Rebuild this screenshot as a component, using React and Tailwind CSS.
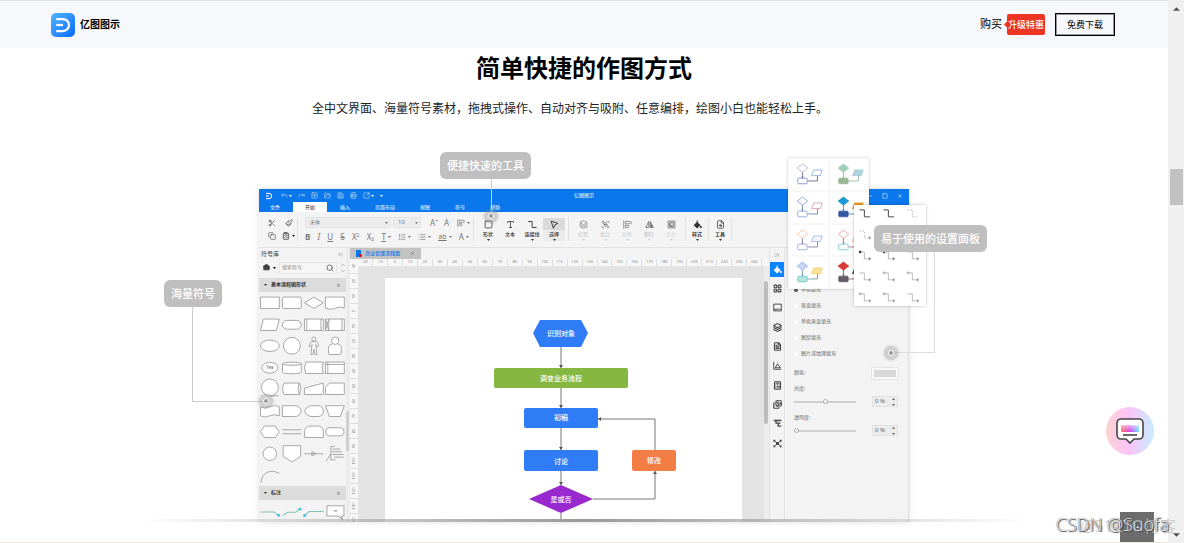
import { useState } from 'react';
import {
  Undo, Redo, SquarePlus, FolderOpen, Save, Printer, SquareArrowOutUpRight, Scissors, Paintbrush,
  Copy, ClipboardList, Search, Square, Type, Layers, Group, AlignStartVertical,
  FileSearch, LayoutGrid, FileText, Calculator, Images, ChevronsLeft, ChevronsRight, ChevronUp, ChevronDown,
  List, ListOrdered, Briefcase, X, Minus,
} from 'lucide-react';

const FONT = "font-['Noto_Sans','Noto_Sans_CJK_SC',sans-serif]";

const quickActions = [Undo, Redo, SquarePlus, FolderOpen, Save, Printer, SquareArrowOutUpRight];
const tabs = ['文件', '开始', '插入', '页面布局', '视图', '符号', '帮助'];

const insertTools = [
  { label: '形状', icon: Square, caret: true },
  { label: '文本', icon: Type },
  { label: '连接线', icon: ElbowIcon, caret: true },
  { label: '选择', icon: CursorIcon, caret: true, active: true },
];

const arrangeTools = [
  { label: '位置', icon: Layers },
  { label: '组合', icon: Group },
  { label: '对齐', icon: AlignStartVertical },
  { label: '翻转', icon: FlipIcon },
  { label: '大小', icon: SizeIcon },
];

const sideIcons = [LayoutGrid, PictureIcon, Layers, FileText, PlotIcon, Calculator, Images, OutlineIcon, HubIcon];
const fills = ['单色填充', '渐变填充', '单色渐变填充', '图案填充', '图片或纹理填充'];

const shapes = [
  'M4 15h56v34H4z',
  'M8 15h48q4 0 4 4v26q0 4-4 4H8q-4 0-4-4V19q0-4 4-4z',
  'M32 15L60 32 32 49 4 32z',
  'M4 15h56v32q-14-5-26 1t-30 0z',
  'M13 15h47l-9 34H4z',
  'M17 19h30a13 13 0 0 1 0 26H17a13 13 0 0 1 0-26z',
  'M4 15h56v34H4zM11 15v34M53 15v34',
  'M4 15h56v34H4zM14 15v34M53 15v34M4 15l10 34M14 15L4 49',
  'M4 32a28 17 0 1 0 56 0a28 17 0 1 0-56 0',
  'M7 32a25 25 0 1 0 50 0a25 25 0 1 0-50 0',
  'M26 12a6 6 0 1 0 12 0a6 6 0 1 0-12 0M24 20h16l6 10-2 6-7-8 4 30h-6l-3-16-3 16h-6l4-30-7 8-2-6z',
  'M22 17a11 11 0 1 0 22 0a11 11 0 1 0-22 0M24 28q-11 0-11 12v14q0 4 4 4h30q4 0 4-4V40q0-12-9-12',
  'M8 32a24 16 0 1 0 48 0a24 16 0 1 0-48 0',
  'M4 20c0-6 56-6 56 0v25c0 6-56 6-56 0zc0 6 56 6 56 0',
  'M8 15h52q-8 17 0 34H8q-8-17 0-34z',
  'M4 15h56v34H4zM4 22h56M11 15v34',
  'M7 28a25 25 0 1 0 50 0a25 25 0 1 0-50 0M32 53h26',
  'M9 15h46q7 17 0 34H9q-9-17 0-34zM55 15q-9 17 0 34',
  'M4 30L60 15v34H4z',
  'M16 15h44v34H4V27z',
  'M4 20q14 8 28 0t28 0v27q-14-7-28 0t-28 0z',
  'M4 17h38a17 16 0 0 1 0 32H4z',
  'M22 17h24q14 2 14 16t-14 16H22Q8 45 4 33 8 21 22 17z',
  'M4 17h56L48 49H16z',
  'M16 15h32l12 17-12 17H16L4 32z',
  'M4 26h56M4 38h56',
  'M18 15h28q14 4 14 16v18H4V31Q4 19 18 15z',
  'M17 20h30a12 12 0 0 1 0 24H17a12 12 0 0 1 0-24z',
  'M12 32a20 20 0 1 0 40 0a20 20 0 1 0-40 0',
  'M6 8h52v32L32 56 6 40z',
  'M4 32h56M26 26l12 6-12 6z',
  'M32 10H20v40h14M20 32L6 54M24 18h24M24 26h28M24 34h34M30 42h28',
  'M6 56C8 20 40 16 60 28',
];

// diamond, box, parallelogram: stroke colour followed by fill colour
const themes = [
  { d: ['#b7a4dc', '#fff'], r: ['#6f83c6', '#fff'], p: ['#7fa8dc', '#fff'], l: '#5a5080' },
  { d: ['#9dd0b8', '#9dd0b8'], r: ['#9ab894', '#9ab894'], p: ['#9fcad4', '#b1d4dc'], l: '#8fae9c' },
  { d: ['#7d9ad8', '#fff'], r: ['#7d9ad8', '#fff'], p: ['#d894a8', '#fff'], l: '#5c7488' },
  { d: ['#1c9ad4', '#1c9ad4'], r: ['#3458a4', '#3458a4'], p: ['#f09a20', '#f09a20'], l: '#2a7fae' },
  { d: ['#f0bc94', '#fff'], r: ['#8fa0d8', '#fff'], p: ['#9ab0e8', '#f4f7ff'], l: '#7a6a9a' },
  { d: ['#ec9a9a', '#fff'], r: ['#62c4d4', '#fff'], p: ['#f0b090', '#fff'], l: '#c05060' },
  { d: ['#9cb4e4', '#c8d6f4'], r: ['#6cc4bc', '#b4e4e0'], p: ['#f0cc60', '#fbe49c'], l: '#5a90a8' },
  { d: ['#dc3838', '#dc3838'], r: ['#645c68', '#645c68'], p: ['#4a4048', '#4a4048'], l: '#704850' },
];

function Icon24({ className, children }) {
  return (
    <svg viewBox="0 0 24 24" className={className} fill="none" stroke="currentColor" strokeWidth="2.5">
      {children}
    </svg>
  );
}

function ElbowIcon({ className }) {
  return (
    <Icon24 className={className}>
      <path d="M2 4h9v16h9" />
      <circle cx="3" cy="4" r="1" />
      <circle cx="21" cy="20" r="1" />
    </Icon24>
  );
}

function CursorIcon({ className }) {
  return <Icon24 className={className}><path d="M3 3l18 6-8 4-4 9z" /></Icon24>;
}

function FlipIcon({ className }) {
  return (
    <Icon24 className={className}>
      <path d="M10 4v16H2z" />
      <path d="M14 4v16h8z" fill="currentColor" />
    </Icon24>
  );
}

function SizeIcon({ className }) {
  return <Icon24 className={className}><path d="M3 3h18v18H3zM9 7h8v8H9zM7 7v10h10" /></Icon24>;
}

function BucketIcon({ className }) {
  return (
    <Icon24 className={className}>
      <path d="M11 1v7" />
      <path d="M11 6l8 8-8 7-8-7z" fill="currentColor" />
      <path d="M21 16q3 5 0 5t0-5z" fill="currentColor" />
    </Icon24>
  );
}

function PictureIcon({ className }) {
  return <Icon24 className={className}><path d="M2 3h20v18H2zM3 17h8l3-2 3 2h4" /></Icon24>;
}

function PlotIcon({ className }) {
  return <Icon24 className={className}><path d="M2 2v20h20M6 18l6-10 8 10zM12 4v2" /></Icon24>;
}

function OutlineIcon({ className }) {
  return <Icon24 className={className}><path d="M2 4h20M8 4v7h12M14 11v8h8" strokeWidth="3.5" /></Icon24>;
}

function HubIcon({ className }) {
  return (
    <Icon24 className={className}>
      <path d="M4 5l16 14M20 5L4 19" />
      <path d="M8 8h8v8H8zM1 2h5v5H1zM18 2h5v5h-5zM1 17h5v5H1zM18 17h5v5h-5z" fill="currentColor" stroke="none" />
    </Icon24>
  );
}

function LogoMark({ className }) {
  return (
    <svg viewBox="0 0 24 24" className={className} fill="none" stroke="currentColor" strokeWidth="3">
      <path d="M3 4h9a8 8 0 0 1 0 16H3" />
      <path d="M3 12h9" />
    </svg>
  );
}

function Caret({ className = '' }) {
  return (
    <svg viewBox="0 0 6 4" className={`h-0.5 w-[3px] shrink-0 ${className}`} fill="currentColor">
      <path d="M0 0h6L3 4z" />
    </svg>
  );
}

function Divider() {
  return <div className="my-1.5 w-px shrink-0 bg-[#e0e0e0]" />;
}

function Header() {
  return (
    <header className="flex h-12 shrink-0 items-center justify-between border-t border-[#e1e2e6] bg-[#f7f8fb] pr-[53px] pl-[51px] text-black">
      <a href="#home" className="flex items-center gap-[5px]">
        <span className="flex size-6 items-center justify-center rounded-[5px] bg-linear-to-br from-[#52b4ff] to-[#0b68ff]">
          <LogoMark className="size-[18px] text-white" />
        </span>
        <span className="text-[10px] font-bold">亿图图示</span>
      </a>
      <nav className="flex items-center">
        <a href="#buy" className="text-[11px]">购买</a>
        <a href="#upgrade" className="relative ml-[5px] rounded-xs bg-[#ee3524] px-px text-[9px] leading-[21px] font-medium text-white">
          <span className="absolute top-2 -left-[2px] size-[5px] rotate-45 bg-[#ee3524]" />
          升级特惠
        </a>
        <button className="ml-2.5 h-[23px] border border-black px-[11px] text-[9px] outline outline-black/40 -outline-offset-2">免费下载</button>
      </nav>
    </header>
  );
}

function TitleBar({ tab, setTab }) {
  return (
    <div className="bg-[#0a78ec] text-white">
      <div className="flex h-[13px] items-center">
        <div className="flex flex-1 items-center gap-[6px] pl-[6px]">
          <LogoMark className="mr-0.5 size-2" />
          {quickActions.map((Icon, i) => (
            <button key={i} className="flex items-center gap-px" aria-label="快捷操作">
              <Icon className="size-[7px] opacity-80" />
              {(i === 0 || i === 6) && <Caret />}
            </button>
          ))}
          <Caret />
        </div>
        <span className="text-[5px]">亿图图示</span>
        <div className="flex flex-1 items-center justify-end gap-[9px] pr-[6px]">
          <Minus className="size-[6px]" />
          <Square className="size-[6px]" />
          <X className="size-[6px]" />
        </div>
      </div>
      <div className="flex h-2.5 gap-px">
        {tabs.map((name) => (
          <button
            key={name}
            onClick={() => setTab(name)}
            className={`px-3 text-[5px] leading-[10px] first:pl-[11px] ${name === tab ? 'bg-white text-[#333]' : ''}`}
          >
            {name}
          </button>
        ))}
      </div>
    </div>
  );
}

function Tool({ label, icon: Icon, caret, active, muted }) {
  return (
    <button className={`flex w-[22px] flex-col items-center ${active ? 'bg-[#ebebeb]' : ''} ${muted ? 'text-[#777]' : 'text-[#333]'}`}>
      <span className={`flex h-3 w-full items-center justify-center ${active ? 'bg-[#dadada]' : ''}`}>
        <Icon className="size-[9px]" />
      </span>
      <span className={`text-[5px] leading-[9px] ${muted ? 'text-[#c4c4c4]' : ''}`}>{label}</span>
      {(caret || muted) && <Caret className={muted ? 'text-[#ccc]' : ''} />}
    </button>
  );
}

function Ribbon() {
  return (
    <div className="flex h-9 overflow-hidden border-b border-[#e2e2e2] bg-[#f4f4f4] text-[#555]">
      <div className="grid w-[38px] shrink-0 grid-cols-2 place-items-center py-1 pl-1">
        <Scissors className="size-2" />
        <Paintbrush className="size-2" />
        <Copy className="size-2" />
        <span className="flex items-center gap-0.5 text-[#222]"><ClipboardList className="size-2" /><Caret /></span>
      </div>
      <Divider />
      <div className="flex w-[175px] shrink-0 flex-col justify-between py-[5px] pl-[7px] text-[#777]">
        <div className="flex items-center gap-0.5">
          <label className="flex h-[11px] w-[86px] items-center border border-[#e4e4e4] bg-[#ececec] pr-0.5">
            <select aria-label="字体" className="h-full flex-1 appearance-none pl-1 text-[5px] outline-none">
              <option>宋体</option>
            </select>
            <Caret />
          </label>
          <label className="flex h-[11px] w-7 items-center border border-[#e4e4e4] bg-[#ececec] pr-0.5">
            <select aria-label="字号" className="h-full min-w-0 flex-1 appearance-none pl-1 text-[6px] outline-none">
              <option>10</option>
            </select>
            <Caret />
          </label>
          <div className="flex flex-1 items-center justify-around pl-1 text-[8px] leading-[10px]">
            <span>A<sup className="text-[5px]">+</sup></span>
            <span>A<sup className="text-[5px]">-</sup></span>
            <span className="flex items-center gap-0.5"><AlignStartVertical className="size-2" /><Caret /></span>
          </div>
        </div>
        <div className="flex h-[11px] items-center justify-between pr-1 text-[8px] leading-[10px]">
          <b>B</b>
          <i>I</i>
          <u>U</u>
          <s>S</s>
          <span>X<sup className="text-[5px]">2</sup></span>
          <span>X<sub className="text-[5px]">2</sub></span>
          <span className="flex items-center gap-0.5"><u>T</u><Caret /></span>
          <span className="flex items-center gap-0.5"><ListOrdered className="size-2" /><Caret /></span>
          <span className="flex items-center gap-0.5"><List className="size-2" /><Caret /></span>
          <span className="flex items-center gap-0.5 text-[7px]"><u>ab</u><Caret /></span>
          <span className="flex items-center gap-0.5">A<Caret /></span>
        </div>
      </div>
      <Divider />
      <div className="flex px-[3px] py-[6px] font-medium">
        {insertTools.map((tool) => <Tool key={tool.label} {...tool} />)}
      </div>
      <Divider />
      <div className="flex px-[3px] py-[6px]">
        {arrangeTools.map((tool) => <Tool key={tool.label} {...tool} muted />)}
      </div>
      <Divider />
      <div className="flex py-[6px] font-bold"><Tool label="样式" icon={BucketIcon} caret /></div>
      <Divider />
      <div className="flex py-[6px] font-bold"><Tool label="工具" icon={FileSearch} caret /></div>
      <Divider />
    </div>
  );
}

function CategoryBar({ title }) {
  return (
    <div className="flex h-3.5 items-center gap-1 bg-[#dcdcdc] px-[5px] text-[5px] font-bold text-[#333]">
      <Caret />
      <span>{title}</span>
      <X className="ml-auto size-[5px]" />
    </div>
  );
}

function SymbolLibrary() {
  return (
    <aside className="flex w-[91px] shrink-0 bg-[#f3f3f3]">
      <div className="w-[87px]">
        <div className="flex h-3 items-center justify-between px-0.5 text-[6px] text-[#444]">
          符号库
          <ChevronsLeft className="size-[7px] text-[#888]" />
        </div>
        <div className="mb-[3px] flex h-[15px] items-center gap-[3px] pl-1">
          <Briefcase className="size-[7px] fill-[#444] text-[#333]" />
          <Caret />
          <label className="flex h-3 flex-1 items-center border border-[#e6e6e6] bg-[#f6f6f6] pr-0.5">
            <input aria-label="搜索符号" placeholder="搜索符号" className="w-0 flex-1 pl-0.5 text-[5px] outline-none placeholder:text-[#888]" />
            <Search className="size-2 text-[#333]" />
          </label>
          <span className="flex flex-col text-[#888]">
            <ChevronUp className="size-[6px]" />
            <ChevronDown className="size-[6px]" />
          </span>
        </div>
        <CategoryBar title="基本流程图形状" />
        <div className="grid h-[194px] grid-cols-4 grid-rows-9">
          {shapes.map((d, i) => (
            <svg key={i} viewBox="0 0 64 64" className="size-full" fill={i === 32 || i === 31 ? 'none' : '#fff'} stroke="#999" strokeWidth="2.5">
              <path d={d} />
              {i === 12 && <text x="32" y="37" textAnchor="middle" fontSize="14" fill="#666" stroke="none">Yes</text>}
            </svg>
          ))}
        </div>
        <CategoryBar title="标注" />
        <svg viewBox="0 0 256 64" className="w-full" fill="none" stroke="#7cc4b8" strokeWidth="3">
          <path d="M4 35h40l14 10M70 46l14-10h24l12-9M134 46l14-12h42" />
          <path d="M200 17h50v30h-8l4 10-14-10h-32z" fill="#fff" stroke="#aaa" />
          <path d="M220 32h10" stroke="#888" />
          <g fill="#38b8f0" stroke="none">
            <circle cx="58" cy="45" r="4" />
            <circle cx="121" cy="27" r="4" />
            <circle cx="134" cy="46" r="4" />
          </g>
        </svg>
      </div>
      <div className="w-1 bg-[#ececec] pt-[163px]">
        <div className="h-10 w-[3px] rounded-full bg-[#cfcfcf]" />
      </div>
    </aside>
  );
}

function FlowChart() {
  return (
    <svg viewBox="0 0 357 244" className={`block w-full ${FONT}`}>
      <g stroke="#777" strokeWidth="1" fill="none">
        <path d="M176 69v21M176 110v20M176 150v22M176 193v14M176 235v9" />
        <path d="M208 221h62v-28M270 172v-31H213" />
      </g>
      <g fill="#555">
        <path d="M174 87h4l-2 3zM174 127h4l-2 3zM174 169h4l-2 3zM174 204h4l-2 3z" />
        <path d="M268 196h4l-2-3zM216 139v4l-3-2z" />
      </g>
      <path d="M155 42h41l7 13-7 14h-41l-7-14z" fill="#2f7cf6" />
      <rect x="109" y="90" width="134" height="20" rx="2" fill="#86b740" />
      <rect x="139" y="130" width="74" height="20" rx="2" fill="#2f7cf6" />
      <rect x="139" y="172" width="74" height="21" rx="2" fill="#2f7cf6" />
      <rect x="247" y="172" width="44" height="21" rx="2" fill="#f27d45" />
      <path d="M176 207l32 14-32 14-32-14z" fill="#9829cf" />
      <g fill="#fff" fontSize="7" fontWeight="500" textAnchor="middle">
        <text x="176" y="58">识别对象</text>
        <text x="176" y="103">调查业务流程</text>
        <text x="176" y="142">初稿</text>
        <text x="176" y="186">讨论</text>
        <text x="269" y="185">修改</text>
        <text x="176" y="224">是或否</text>
      </g>
    </svg>
  );
}

function Canvas() {
  const horizontal = Array.from({ length: 27 }, (_, i) => i * 10 - 20);
  const vertical = Array.from({ length: 18 }, (_, i) => i * 10 - 30);

  return (
    <div className="min-w-0 flex-1 bg-[#f3f3f3]">
      <div className="flex h-[11px]">
        <button className="flex w-[71px] items-center gap-1 bg-[#c2c2c2] px-[6px] text-[5px] font-medium text-[#1a7cf0]">
          <span className="relative h-[7px] w-[5px] bg-[#0a78ec]">
            <span className="absolute -right-px bottom-0 size-[3px] rounded-full bg-red-600" />
          </span>
          商业管理流程图
          <X className="ml-auto size-[5px] text-[#555]" />
        </button>
      </div>
      <div className="flex h-[7px] bg-[#f7f7f7] pr-[7px] pl-2">
        {horizontal.map((n) => (
          <span key={n} className="w-0 flex-1 border-r border-[#ddd] text-center text-[4px] leading-[6px] text-[#888]">{n}</span>
        ))}
      </div>
      <div className="flex">
        <div className="-mt-[7px] w-2 shrink-0 bg-[#f7f7f7]">
          {vertical.map((n) => (
            <div key={n} className="flex h-[15px] items-center justify-center border-b border-[#ddd]">
              <span className="-rotate-90 text-[4px] text-[#777]">{Math.abs(n)}</span>
            </div>
          ))}
        </div>
        <div className="flex-1 bg-[#e3e3e3] pt-3 pr-[22px] pl-[27px]">
          <div className="bg-white"><FlowChart /></div>
        </div>
        <div className="w-[5px] bg-[#ededed] pt-[15px]">
          <div className="h-[143px] w-1 rounded-full bg-[#bdbdbd]" />
        </div>
      </div>
    </div>
  );
}

function SliderRow({ id, label, value }) {
  return (
    <div className="mt-[5px] text-[5px]">
      <label htmlFor={id} className="mb-0.5 block leading-[9px]">{label}</label>
      <div className="flex h-[13px] items-center justify-between">
        <input
          id={id}
          type="range"
          defaultValue={value}
          className="h-0.5 w-[62px] appearance-none bg-[#cfcfcf] [&::-webkit-slider-thumb]:size-[5px] [&::-webkit-slider-thumb]:appearance-none [&::-webkit-slider-thumb]:rounded-full [&::-webkit-slider-thumb]:border [&::-webkit-slider-thumb]:border-[#aaa] [&::-webkit-slider-thumb]:bg-white"
        />
        <label className="flex h-[11px] w-[26px] items-center border border-[#e2e2e2] bg-[#ececec] px-0.5">
          <input aria-label={`${label}数值`} defaultValue="0 %" className="w-0 flex-1 text-[6px] outline-none" />
          <span className="flex flex-col gap-1">
            <Caret className="rotate-180" />
            <Caret />
          </span>
        </label>
      </div>
    </div>
  );
}

function Inspector() {
  return (
    <>
      <div className="w-4 shrink-0 border-x border-[#e4e4e4] bg-[#f3f3f3] text-[#444]">
        <ChevronsRight className="mx-auto mt-[3px] mb-[3px] size-2 text-[#999]" />
        <button aria-label="填充" className="flex h-[15px] w-full items-center justify-center bg-[#0a84ff] text-white">
          <BucketIcon className="size-[9px]" />
        </button>
        <div className="mt-[2px] flex h-[174px] flex-col">
          {sideIcons.map((Icon, i) => (
            <button key={i} aria-label={`面板 ${i + 1}`} className="flex flex-1 items-center justify-center">
              <Icon className="size-[9px]" strokeWidth={3} />
            </button>
          ))}
        </div>
      </div>
      <div className="w-[124px] shrink-0 border-r border-[#ddd] bg-[#f3f3f3] pt-[34px] pr-[10px] pl-[9px] text-[#666]">
        {fills.map((name) => (
          <label key={name} className="flex h-4 items-center gap-[3px] text-[5px]">
            <input type="radio" name="fill" className="size-1 appearance-none rounded-full bg-white checked:bg-[#555]" defaultChecked={name === '单色填充'} />
            {name}
          </label>
        ))}
        <div className="mt-[5px] flex h-3 items-center justify-between text-[5px]">
          颜色:
          <button aria-label="颜色" className="h-[11px] w-[26px] border-2 border-[#f8f8f8] bg-[#d8d8d8] outline outline-[#e4e4e4]" />
        </div>
        <SliderRow id="brightness" label="亮度:" value={50} />
        <SliderRow id="opacity" label="透明度:" value={0} />
      </div>
    </>
  );
}

function ThemeGallery() {
  return (
    <div className="absolute -top-[31px] right-10 grid h-[131px] w-[81px] grid-cols-2 grid-rows-4 bg-white shadow-[0_0_3px_#0003]">
      {themes.map(({ d, r, p, l }, i) => (
        <svg key={i} viewBox="0 0 121 98" className="size-full border border-[#f8f8f8]" strokeWidth="2.5">
          <path d="M42 29v40M58 70h32V48" fill="none" stroke={l} />
          <path d="M39 56h6l-3 6zM87 54h6l-3-7z" fill={l} />
          <path d="M42 16l17 13-17 13-17-13z" stroke={d[0]} fill={d[1]} />
          <rect x="27" y="61" width="30" height="18" rx="3" stroke={r[0]} fill={r[1]} />
          <path d="M78 35h27l-6 18H71z" stroke={p[0]} fill={p[1]} />
        </svg>
      ))}
    </div>
  );
}

function LineGallery() {
  return (
    <div className="absolute top-4 -right-[17px] h-[101px] w-[72px] overflow-hidden bg-white shadow-[0_0_3px_#0004]">
      <div className="grid grid-cols-3">
        {Array.from({ length: 15 }, (_, i) => {
          const dashed = i === 2 || i === 3;
          const start = i >= 6 && i !== 8 && i !== 9 && i !== 14;
          const solid = i === 6 || i === 7;
          return (
            <svg key={i} viewBox="0 0 72 64" className="h-[21px] w-full" fill="none" stroke={i < 2 ? '#444' : '#999'} strokeWidth={i < 2 ? 3 : 2}>
              <path d="M16 15h15v21h17" strokeDasharray={dashed ? '5 4' : undefined} />
              {start && <circle cx="18" cy="15" r="3" fill={solid ? '#222' : '#fff'} stroke={solid ? '#222' : '#888'} />}
              {i > 2 && <path d="M46 32l5 4-5 4z" fill={solid ? '#222' : '#999'} />}
            </svg>
          );
        })}
      </div>
    </div>
  );
}

function Callout({ className, children }) {
  return (
    <div className={`absolute rounded-md bg-[#bfbfbf] px-[7px] text-[11px] leading-[27px] font-medium whitespace-nowrap text-white ${className}`}>
      {children}
    </div>
  );
}

function Hotspot({ className }) {
  return (
    <span className={`absolute flex size-3.5 items-center justify-center rounded-full bg-[#8885] shadow-[0_0_3px_#8886] ${className}`}>
      <span className="size-[6px] rounded-full border border-white bg-[#999]" />
    </span>
  );
}

function AppWindow() {
  const [tab, setTab] = useState('开始');

  return (
    <div className="relative mx-auto max-w-[650px]">
      <div className="shadow-[0_0_6px_#0002]">
        <TitleBar tab={tab} setTab={setTab} />
        <Ribbon />
        <div className="flex h-[274px] overflow-hidden">
          <SymbolLibrary />
          <Canvas />
          <Inspector />
        </div>
      </div>

      <ThemeGallery />
      <LineGallery />

      {/* leader lines from the callouts to their hotspots */}
      <div className="absolute -top-2.5 left-[232px] h-9 w-px bg-[#cfcfcf]" />
      <div className="absolute top-[118px] -left-[67px] h-[95px] w-[73px] border-b border-l border-[#ccc]" />
      <div className="absolute top-[63px] -right-[26px] h-[101px] w-[43px] border-r border-b border-[#ddd]" />
      <Hotspot className="top-5 left-[225px]" />
      <Hotspot className="top-[205px] left-0" />
      <Hotspot className="top-[157px] right-[11px]" />
      <Callout className="-top-[37px] left-[181px]">便捷快速的工具</Callout>
      <Callout className="top-[91px] -left-[95px]">海量符号</Callout>
      <Callout className="top-9 -right-[78px]">易于使用的设置面板</Callout>
    </div>
  );
}

function ChatButton() {
  return (
    <button aria-label="在线客服" className="absolute right-[14px] bottom-[87px] flex size-12 items-center justify-center rounded-full bg-linear-to-r from-[#ffd2d0] via-[#f8c4fa] to-[#c4ecff]">
      <svg viewBox="0 0 28 26" className="h-[26px] w-7">
        <defs>
          <linearGradient id="chat">
            <stop offset="0" stopColor="#ff6a50" />
            <stop offset="0.5" stopColor="#d83cf0" />
            <stop offset="1" stopColor="#60e0ff" />
          </linearGradient>
          <linearGradient id="fade" x2="0" y2="1">
            <stop offset="0" stopColor="#fff" stopOpacity="0.6" />
            <stop offset="1" stopColor="#fff" stopOpacity="0" />
          </linearGradient>
        </defs>
        <path d="M5 1h18a4 4 0 0 1 4 4v12a4 4 0 0 1-4 4h-5l-4 4-4-4H5a4 4 0 0 1-4-4V5a4 4 0 0 1 4-4z" fill="#fff" stroke="#444" strokeWidth="1.6" />
        <rect x="5" y="7" width="18" height="7" rx="1" fill="url(#chat)" />
        <rect x="5" y="7" width="18" height="7" rx="1" fill="url(#fade)" />
        <path d="M7 17h14" stroke="#444" strokeWidth="1.6" />
      </svg>
    </button>
  );
}

function ScrollRail() {
  return (
    <div className="flex w-4 shrink-0 flex-col items-center bg-[#f0f0f0] text-[#505050]">
      <svg viewBox="0 0 8 4" className="mt-[7px] h-1 w-[7px]" fill="currentColor"><path d="M0 4h8L4 0z" /></svg>
      <div className="mt-[158px] h-9 w-[13px] bg-[#c1c1c1]" />
      <svg viewBox="0 0 8 4" className="mt-auto mb-[6px] h-1 w-[7px]" fill="currentColor"><path d="M0 0h8L4 4z" /></svg>
    </div>
  );
}

export default function App() {
  return (
    <div className={`flex h-screen overflow-hidden bg-white ${FONT}`}>
      <div className="relative flex min-w-0 flex-1 flex-col overflow-hidden border-b border-[#ece6dc]">
        <Header />
        <main>
          <h1 className="mt-1 text-center text-2xl leading-8 font-bold text-black">简单快捷的作图方式</h1>
          <p className="mx-auto mt-[13px] max-w-[544px] text-xs leading-6 text-[#222]">
            全中文界面、海量符号素材，拖拽式操作、自动对齐与吸附、任意编排，绘图小白也能轻松上手。
          </p>
          <div className="relative mt-[68px]">
            <AppWindow />
            <div className="absolute inset-x-[12%] bottom-0 h-[3px] bg-linear-to-r from-transparent via-[#999] to-transparent" />
          </div>
        </main>
        <ChatButton />
        <button aria-label="返回顶部" className="absolute right-[14px] bottom-0 flex h-[30px] w-[34px] items-center justify-center bg-[#6c6c6c] text-white">
          <Caret className="h-1 w-2 rotate-180" />
        </button>
      </div>
      <ScrollRail />
      <div className="pointer-events-none absolute right-2 bottom-[7px] text-[16px] leading-5 text-[#c4c4c4]/80">@51CTO博客</div>
      <div className="pointer-events-none absolute right-[15px] bottom-[7px] font-['Open_Sans'] text-[18px] leading-6 font-light text-[#eee] [text-shadow:1px_1px_1px_#333,0_0_1px_#444]">
        CSDN @Suofa
      </div>
    </div>
  );
}
